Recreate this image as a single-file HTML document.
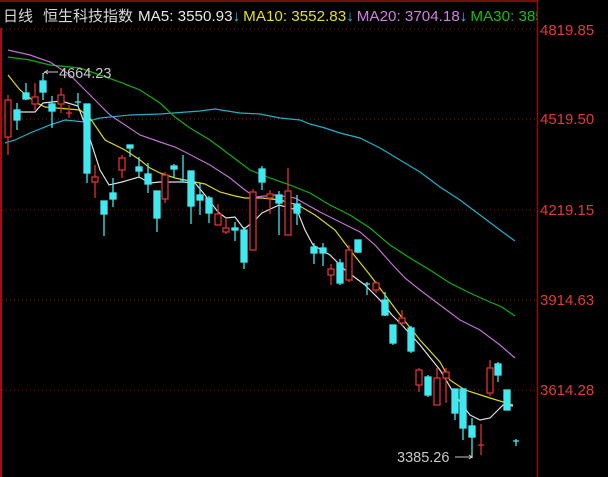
<!DOCTYPE html>
<html><head><meta charset="utf-8"><style>
html,body{margin:0;padding:0;background:#000;width:608px;height:477px;overflow:hidden}
svg{display:block}
text{font-family:"Liberation Sans","Noto Sans CJK SC",sans-serif}
</style></head><body>
<svg width="608" height="477" xmlns="http://www.w3.org/2000/svg">
<rect width="608" height="477" fill="#000"/>
<line x1="0" y1="1" x2="537" y2="1" stroke="#a01010" stroke-width="1.5"/>
<line x1="1" y1="28" x2="1" y2="477" stroke="#a01010" stroke-width="2"/>
<line x1="537.5" y1="0" x2="537.5" y2="477" stroke="#8a1010" stroke-width="1.5"/>
<g stroke="#a01010" stroke-dasharray="1,3" stroke-width="1">
<line x1="2" y1="29" x2="537" y2="29"/>
<line x1="2" y1="119" x2="537" y2="119"/>
<line x1="2" y1="210" x2="537" y2="210"/>
<line x1="2" y1="300" x2="537" y2="300"/>
<line x1="2" y1="390" x2="537" y2="390"/>
</g>
<g fill="#e03a3a" font-size="15">
<text x="540" y="35">4819.85</text>
<text x="540" y="124">4519.50</text>
<text x="540" y="215">4219.15</text>
<text x="540" y="305">3914.63</text>
<text x="540" y="395">3614.28</text>
</g>
<svg x="0" y="0" width="537" height="28">
<text y="21" font-size="15" fill="#d8d8d8"><tspan x="3">日线</tspan><tspan x="43">恒生科技指数</tspan></text>
<text y="21" font-size="15.2"><tspan x="138" fill="#e8e8e8">MA5: 3550.93</tspan><tspan fill="#30c0e0">↓</tspan><tspan dx="3" fill="#e0e020">MA10: 3552.83</tspan><tspan fill="#30c0e0">↓</tspan><tspan dx="3" fill="#d080e0">MA20: 3704.18</tspan><tspan fill="#30c0e0">↓</tspan><tspan dx="3" fill="#10c010">MA30: 3855.00</tspan></text>
</svg>
<g fill="none" stroke-width="1.2">
<polyline stroke="#20b0c8" points="5,143 15,140 30,133 50,125 65,120 85,122 100,118 130,115 160,114 200,111 215,109 240,113 260,114 280,118 300,120 310,124 325,128 340,133 360,138 380,148 400,160 420,172 440,187 460,200 480,215 500,230 515,241"/>
<polyline stroke="#10b010" points="8,57 30,60 50,65 80,68 100,75 120,82 140,90 160,103 175,117 190,128 210,140 230,155 250,170 270,178 290,185 310,193 330,205 350,215 370,228 390,245 410,258 430,270 450,283 470,293 490,302 502,307 515,316"/>
<polyline stroke="#c070d0" points="8,50 30,55 50,62 70,75 85,90 95,100 110,115 125,125 140,135 160,142 175,147 185,152 210,165 230,178 245,190 255,197 275,195 295,198 320,212 340,222 360,232 375,245 390,262 405,278 420,290 440,305 460,320 480,330 500,345 515,358"/>
<polyline stroke="#d8d820" points="8,75 20,90 35,102 45,107 80,110 90,118 105,140 125,150 140,160 150,168 160,173 175,178 190,181 205,184 220,192 235,196 245,198 262,198 280,200 298,205 315,215 335,230 350,250 370,275 385,295 400,315 420,340 440,362 450,380 465,390 490,398 513,405"/>
<polyline stroke="#e0e0e0" points="17,112 35,112 43,103 61,101 78,106 87,130 100,170 109,185 122,182 139,177 150,183 160,182 183,182 195,183 205,195 218,212 226,218 235,217 244,229 253,222 262,213 279,205 297,210 305,230 313,245 330,255 345,270 365,285 380,300 392,315 402,325 420,345 440,370 455,395 470,415 480,420 490,418 503,405 513,406"/>
</g>
<g stroke-width="1.3">
<g stroke="#e03030" fill="none">
<line x1="8" y1="95" x2="8" y2="155"/><rect x="5" y="100" width="6" height="37" fill="#000"/>
<line x1="35" y1="83" x2="35" y2="110"/><rect x="32" y="97" width="6" height="7" fill="#000"/>
<line x1="61" y1="88" x2="61" y2="113"/><rect x="58" y="95" width="6" height="9" fill="#000"/>
<line x1="69" y1="105" x2="69" y2="118"/><line x1="66" y1="113" x2="72" y2="113"/>
<line x1="95" y1="165" x2="95" y2="198"/><rect x="92" y="177" width="6" height="5" fill="#000"/>
<line x1="122" y1="155" x2="122" y2="178"/><rect x="119" y="158" width="6" height="12" fill="#000"/>
<line x1="165" y1="172" x2="165" y2="203"/><rect x="162" y="175" width="6" height="24" fill="#000"/>
<line x1="218" y1="204" x2="218" y2="225"/><rect x="215" y="214" width="6" height="11" fill="#000"/>
<line x1="226" y1="218" x2="226" y2="234"/><rect x="223" y="228" width="6" height="4" fill="#000"/>
<line x1="253" y1="189" x2="253" y2="250"/><rect x="250" y="192" width="6" height="58" fill="#000"/>
<line x1="270" y1="190" x2="270" y2="214"/><rect x="267" y="194" width="6" height="4" fill="#000"/>
<line x1="288" y1="168" x2="288" y2="235"/><rect x="285" y="191" width="6" height="44" fill="#000"/>
<line x1="331" y1="264" x2="331" y2="285"/><rect x="328" y="269" width="6" height="6" fill="#000"/>
<line x1="349" y1="245" x2="349" y2="282"/><rect x="346" y="250" width="6" height="30" fill="#000"/>
<line x1="376" y1="281" x2="376" y2="293"/><rect x="373" y="283" width="6" height="7" fill="#000"/>
<line x1="402" y1="310" x2="402" y2="326"/><rect x="399" y="318" width="6" height="5" fill="#000"/>
<line x1="419" y1="368" x2="419" y2="392"/><rect x="416" y="370" width="6" height="15" fill="#000"/>
<line x1="437" y1="368" x2="437" y2="405"/><rect x="434" y="378" width="6" height="27" fill="#000"/>
<line x1="446" y1="368" x2="446" y2="403"/><rect x="443" y="372" width="6" height="6" fill="#000"/>
<line x1="481" y1="424" x2="481" y2="455"/><line x1="478" y1="445" x2="484" y2="445"/>
<line x1="490" y1="360" x2="490" y2="396"/><rect x="487" y="368" width="6" height="25" fill="#000"/>
</g>
<g stroke="#40e8f0" fill="#40e8f0">
<line x1="17" y1="103" x2="17" y2="130"/><rect x="14" y="110" width="6" height="10"/>
<line x1="26" y1="83" x2="26" y2="100"/><rect x="23" y="93" width="6" height="6"/>
<line x1="43" y1="73" x2="43" y2="100"/><rect x="40" y="81" width="6" height="11"/>
<line x1="52" y1="96" x2="52" y2="128"/><rect x="49" y="104" width="6" height="7"/>
<line x1="78" y1="93" x2="78" y2="106"/><line x1="75" y1="102" x2="81" y2="102"/>
<line x1="87" y1="104" x2="87" y2="183"/><rect x="84" y="104" width="6" height="69"/>
<line x1="104" y1="201" x2="104" y2="236"/><rect x="101" y="201" width="6" height="13"/>
<line x1="113" y1="178" x2="113" y2="207"/><rect x="110" y="193" width="6" height="6"/>
<line x1="130" y1="145" x2="130" y2="157"/><rect x="127" y="145" width="6" height="3"/>
<line x1="139" y1="157" x2="139" y2="177"/><rect x="136" y="167" width="6" height="4"/>
<line x1="148" y1="163" x2="148" y2="193"/><rect x="145" y="174" width="6" height="10"/>
<line x1="157" y1="191" x2="157" y2="232"/><rect x="154" y="191" width="6" height="27"/>
<line x1="174" y1="164" x2="174" y2="178"/><rect x="171" y="166" width="6" height="3"/>
<line x1="183" y1="155" x2="183" y2="182"/><line x1="180" y1="180" x2="186" y2="180"/>
<line x1="191" y1="171" x2="191" y2="224"/><rect x="188" y="171" width="6" height="35"/>
<line x1="200" y1="183" x2="200" y2="215"/><rect x="197" y="195" width="6" height="5"/>
<line x1="209" y1="196" x2="209" y2="223"/><rect x="206" y="198" width="6" height="15"/>
<line x1="235" y1="222" x2="235" y2="241"/><rect x="232" y="228" width="6" height="2"/>
<line x1="244" y1="227" x2="244" y2="269"/><rect x="241" y="230" width="6" height="32"/>
<line x1="262" y1="166" x2="262" y2="190"/><rect x="259" y="169" width="6" height="13"/>
<line x1="279" y1="191" x2="279" y2="235"/><rect x="276" y="195" width="6" height="8"/>
<line x1="297" y1="195" x2="297" y2="225"/><rect x="294" y="204" width="6" height="9"/>
<line x1="314" y1="243" x2="314" y2="264"/><rect x="311" y="247" width="6" height="6"/>
<line x1="323" y1="243" x2="323" y2="266"/><rect x="320" y="248" width="6" height="5"/>
<line x1="340" y1="259" x2="340" y2="285"/><rect x="337" y="263" width="6" height="20"/>
<line x1="358" y1="240" x2="358" y2="253"/><rect x="355" y="240" width="6" height="12"/>
<line x1="367" y1="282" x2="367" y2="295"/><line x1="364" y1="284" x2="370" y2="284"/>
<line x1="385" y1="292" x2="385" y2="316"/><rect x="382" y="300" width="6" height="15"/>
<line x1="393" y1="325" x2="393" y2="345"/><rect x="390" y="325" width="6" height="18"/>
<line x1="411" y1="326" x2="411" y2="353"/><rect x="408" y="328" width="6" height="23"/>
<line x1="428" y1="375" x2="428" y2="397"/><rect x="425" y="377" width="6" height="18"/>
<line x1="455" y1="389" x2="455" y2="420"/><rect x="452" y="389" width="6" height="24"/>
<line x1="463" y1="388" x2="463" y2="440"/><rect x="460" y="389" width="6" height="39"/>
<line x1="472" y1="418" x2="472" y2="458"/><rect x="469" y="426" width="6" height="11"/>
<line x1="498" y1="362" x2="498" y2="382"/><rect x="495" y="364" width="6" height="11"/>
<line x1="507" y1="390" x2="507" y2="410"/><rect x="504" y="390" width="6" height="20"/>
<line x1="516" y1="439" x2="516" y2="446"/><line x1="513" y1="441" x2="519" y2="441"/>
</g>
</g>
<g stroke="#c8c8c8" fill="none" stroke-width="1">
<polyline points="43,74 45,72 58,72"/><polyline points="48,70 45,72 48,74"/>
<polyline points="455,457 472,457 472,452"/><polyline points="469,455 472,457 469,459"/>
</g>
<text x="59" y="78" fill="#c8c8c8" font-size="14.5">4664.23</text>
<text x="397" y="462" fill="#c8c8c8" font-size="14.5">3385.26</text>
</svg>
</body></html>
